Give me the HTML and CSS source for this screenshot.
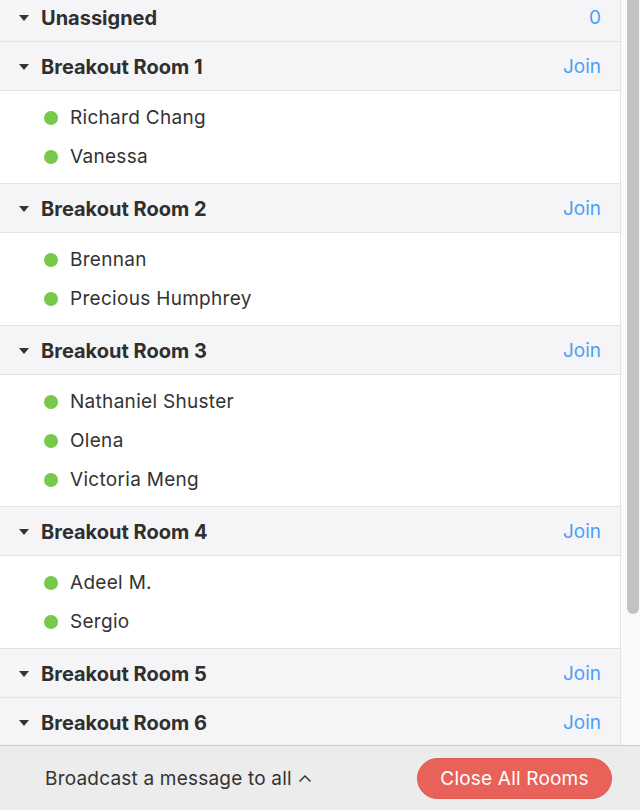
FILE: index.html
```html
<!DOCTYPE html>
<html>
<head>
<meta charset="utf-8">
<link rel="stylesheet" href="styles.css">
</head>
<body>
<div class="app">
  <div class="main">
    <div class="list">
      <div class="rooms">
        <div class="room-head"><span class="caret"></span><span class="room-name">Unassigned</span><span class="room-action">0</span></div>

        <div class="room-head"><span class="caret"></span><span class="room-name">Breakout Room 1</span><span class="room-action">Join</span></div>
        <div class="members">
          <div class="member"><span class="dot"></span>Richard Chang</div>
          <div class="member"><span class="dot"></span>Vanessa</div>
        </div>

        <div class="room-head"><span class="caret"></span><span class="room-name">Breakout Room 2</span><span class="room-action">Join</span></div>
        <div class="members">
          <div class="member"><span class="dot"></span>Brennan</div>
          <div class="member"><span class="dot"></span>Precious Humphrey</div>
        </div>

        <div class="room-head"><span class="caret"></span><span class="room-name">Breakout Room 3</span><span class="room-action">Join</span></div>
        <div class="members">
          <div class="member"><span class="dot"></span>Nathaniel Shuster</div>
          <div class="member"><span class="dot"></span>Olena</div>
          <div class="member"><span class="dot"></span>Victoria Meng</div>
        </div>

        <div class="room-head"><span class="caret"></span><span class="room-name">Breakout Room 4</span><span class="room-action">Join</span></div>
        <div class="members">
          <div class="member"><span class="dot"></span>Adeel M.</div>
          <div class="member"><span class="dot"></span>Sergio</div>
        </div>

        <div class="room-head"><span class="caret"></span><span class="room-name">Breakout Room 5</span><span class="room-action">Join</span></div>
        <div class="room-head"><span class="caret"></span><span class="room-name">Breakout Room 6</span><span class="room-action">Join</span></div>
      </div>
    </div>
    <div class="scrollbar"><div class="thumb"></div></div>
  </div>
  <div class="footer">
    <span class="broadcast">Broadcast a message to all
      <svg class="chev" width="14" height="9" viewBox="0 0 14 9"><path d="M1.5 7.5 L7 2 L12.5 7.5" fill="none" stroke="#333" stroke-width="1.5"/></svg>
    </span>
    <button class="close-btn">Close All Rooms</button>
  </div>
</div>
</body>
</html>
```
FILE: styles.css
```css
* { box-sizing: border-box; }
html, body { margin: 0; padding: 0; }
body {
  width: 640px;
  height: 810px;
  overflow: hidden;
  font-family: "Inter", "Helvetica Neue", Arial, sans-serif;
  color: #2b2b2b;
  background: #fff;
}
.app {
  display: flex;
  flex-direction: column;
  height: 810px;
}
.main {
  flex: 1;
  display: flex;
  min-height: 0;
  overflow: hidden;
}
.list {
  width: 621px;
  border-right: 1px solid #e4e4e4;
  overflow: hidden;
}
.rooms {
  margin-top: -7px;
}
.room-head {
  height: 49px;
  display: flex;
  align-items: center;
  background: #f5f5f7;
  border-bottom: 1px solid #e3e3e5;
  padding: 1px 19px 0 19px;
}
.caret {
  width: 0;
  height: 0;
  border-left: 5px solid transparent;
  border-right: 5px solid transparent;
  border-top: 6px solid #333;
  margin-right: 12px;
}
.room-name {
  flex: 1;
  font-weight: 700;
  font-size: 20px;
  color: #2f2f2f;
}
.room-action {
  color: #4c9ff5;
  font-size: 19px;
}
.members {
  background: #fff;
  padding: 7px 0;
  border-bottom: 1px solid #e3e3e5;
}
.member {
  height: 39px;
  display: flex;
  align-items: center;
  padding-left: 44px;
  font-size: 19px;
  letter-spacing: 0.3px;
  color: #333;
}
.dot {
  width: 14px;
  height: 14px;
  border-radius: 50%;
  background: #78c84b;
  margin-right: 12px;
}
.scrollbar {
  width: 19px;
  background: #fafafa;
  padding: 0 1px 0 6px;
}
.thumb {
  height: 614px;
  background: #c2c2c2;
  border-radius: 0 0 6px 6px;
}
.footer {
  height: 65px;
  flex-shrink: 0;
  background: #ececec;
  border-top: 1px solid #c9c9c9;
  display: flex;
  align-items: center;
  justify-content: space-between;
  padding: 0 28px 0 45px;
}
.broadcast {
  font-size: 19px;
  letter-spacing: 0.2px;
  color: #333;
  display: flex;
  align-items: center;
  gap: 6px;
}
.close-btn {
  width: 195px;
  height: 41px;
  border: 1px solid #e05a52;
  border-radius: 21px;
  background: #e9625a;
  color: #fff;
  font-family: inherit;
  font-size: 19px;
  letter-spacing: 0.2px;
  padding: 0;
}
```
